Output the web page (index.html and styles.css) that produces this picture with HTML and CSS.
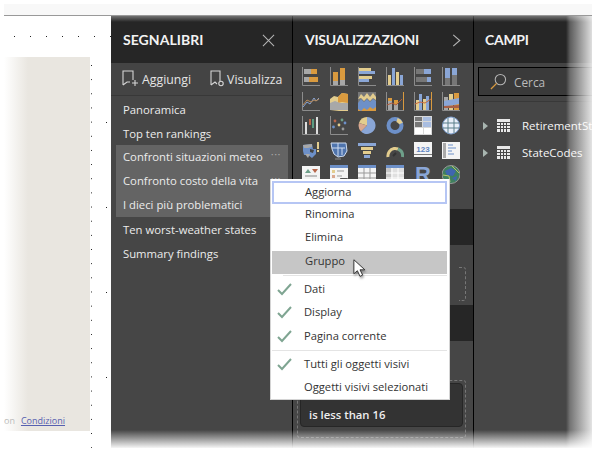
FILE: index.html
```html
<!DOCTYPE html>
<html lang="it">
<head>
<meta charset="utf-8">
<title>Segnalibri</title>
<link rel="stylesheet" href="styles.css">
</head>
<body>
<div class="page">
  <div class="topstrip"></div>
  <div class="window">
    <section class="canvas">
      <div class="dots-row"></div>
      <div class="canvas-body">
        <div class="report">
          <p class="terms"><span class="terms-on">on</span><a class="terms-link">Condizioni</a></p>
        </div>
        <div class="dots-col"></div>
      </div>
    </section>

    <section class="panel bookmarks">
      <header class="panel-head">
        <h2>SEGNALIBRI</h2>
        <svg class="head-icon" viewBox="0 0 14 14"><path d="M1 1l12 12M13 1L1 13" fill="none" stroke="#b5b5b5" stroke-width="1.1"/></svg>
      </header>
      <div class="toolbar">
        <span class="tool">
          <svg class="tool-ic" viewBox="0 0 18 18"><path d="M2 15V1h10v9M2 15l4-3h3M11 13h6M14 10v6" fill="none" stroke="#d6d6d6" stroke-width="1.1"/></svg>Aggiungi
        </span>
        <span class="tool tool-view">
          <svg class="tool-ic" viewBox="0 0 18 18"><path d="M3 15V1h9v10M3 15l4-3 2 2" fill="none" stroke="#d6d6d6" stroke-width="1.1"/><circle cx="13" cy="13.5" r="2.2" fill="none" stroke="#d6d6d6" stroke-width="1.1"/></svg>Visualizza
        </span>
      </div>
      <ul class="marks">
        <li>Panoramica</li>
        <li>Top ten rankings</li>
        <li class="sel">Confronti situazioni meteo<span class="more">···</span></li>
        <li class="sel">Confronto costo della vita<span class="more">···</span></li>
        <li class="sel">I dieci più problematici<span class="more">···</span></li>
        <li>Ten worst-weather states</li>
        <li>Summary findings</li>
      </ul>
    </section>

    <section class="panel viz">
      <header class="panel-head">
        <h2>VISUALIZZAZIONI</h2>
        <svg class="head-chev" viewBox="0 0 9 14"><path d="M1 1l7 6-7 6" fill="none" stroke="#b5b5b5" stroke-width="1.2"/></svg>
      </header>
      <div class="viz-icons">
        <svg class="vi" viewBox="0 0 18 19"><path d="M.5 0v18.500H18" fill="none" stroke="#8c8c8c"/><rect x="2" y="2" width="7" height="5" fill="#a8a8a8"/><rect x="9" y="2" width="6" height="5" fill="#d99a3f"/><rect x="2" y="10" width="5" height="5" fill="#a8a8a8"/><rect x="7" y="10" width="9" height="5" fill="#d99a3f"/></svg>
        <svg class="vi" viewBox="0 0 18 19"><path d="M.5 0v18.500H18" fill="none" stroke="#8c8c8c"/><rect x="3" y="5" width="5" height="9" fill="#d99a3f"/><rect x="3" y="14" width="5" height="4" fill="#a8a8a8"/><rect x="10" y="1" width="5" height="12" fill="#d99a3f"/><rect x="10" y="13" width="5" height="5" fill="#a8a8a8"/></svg>
        <svg class="vi" viewBox="0 0 18 19"><path d="M.5 0v18.500H18" fill="none" stroke="#8c8c8c"/><rect x="1" y="1" width="12" height="3" fill="#e3cd8e"/><rect x="1" y="4" width="16" height="3" fill="#8aa6d6"/><rect x="1" y="9" width="13" height="3" fill="#e3cd8e"/><rect x="1" y="12" width="10" height="3" fill="#8aa6d6"/></svg>
        <svg class="vi" viewBox="0 0 18 19"><path d="M.5 0v18.500H18" fill="none" stroke="#8c8c8c"/><rect x="2" y="8" width="3" height="10" fill="#e3cd8e"/><rect x="6" y="1" width="3" height="17" fill="#8aa6d6"/><rect x="10" y="5" width="3" height="13" fill="#e3cd8e"/><rect x="14" y="8" width="3" height="10" fill="#8aa6d6"/></svg>
        <svg class="vi" viewBox="0 0 18 19"><path d="M.5 0v18.500H18" fill="none" stroke="#8c8c8c"/><rect x="2" y="2" width="8" height="5" fill="#777"/><rect x="10" y="2" width="7" height="5" fill="#8aa6d6"/><rect x="2" y="10" width="11" height="5" fill="#777"/><rect x="13" y="10" width="4" height="5" fill="#8aa6d6"/></svg>
        <svg class="vi" viewBox="0 0 18 19"><path d="M.5 0v18.500H18" fill="none" stroke="#8c8c8c"/><rect x="3" y="1" width="5" height="10" fill="#8aa6d6"/><rect x="3" y="11" width="5" height="7" fill="#777"/><rect x="10" y="1" width="5" height="7" fill="#8aa6d6"/><rect x="10" y="8" width="5" height="10" fill="#777"/></svg>

        <svg class="vi" viewBox="0 0 18 19"><path d="M.5 0v18.500H18" fill="none" stroke="#8c8c8c"/><path d="M1 15l4-5 3 2 4-6 2 3 3-3" fill="none" stroke="#8aa6d6"/><path d="M1 13l4-5 4 2 3-2 2 1 3-2" fill="none" stroke="#b98a58"/></svg>
        <svg class="vi" viewBox="0 0 18 19"><path d="M0 18V7l4-3 4 1 4-4 6 1v18z" fill="#e3cd8e"/><path d="M8 5l4-4 6 1v9l-6-1-4 1z" fill="#d99a3f"/><path d="M0 18v-7l5-2 5 2 8 0v7z" fill="#a8a8a8"/></svg>
        <svg class="vi" viewBox="0 0 18 19"><rect width="18" height="19" fill="#777"/><path d="M0 19v-7l3 2 3-3 3 2 3-3 3 2 3-2v9z" fill="#d99a3f"/><path d="M0 11l3-4 3 3 3-3 3 3 3-3 3 2v6l-3 2-3-2-3 3-3-2-3 3-3-2z" fill="#6d90c8"/><path d="M0 7l3-5 3 3 3-4 3 4 3-4 3 4v3l-3-2-3 3-3-3-3 3-3-3z" fill="#e3cd8e"/></svg>
        <svg class="vi" viewBox="0 0 18 19"><path d="M.5 0v18.500H18" fill="none" stroke="#8c8c8c"/><path d="M17.500 0v18" stroke="#d99a3f"/><rect x="2" y="9" width="4" height="9" fill="#a8a8a8"/><rect x="2" y="6" width="4" height="3" fill="#d99a3f"/><rect x="8" y="12" width="4" height="6" fill="#a8a8a8"/><rect x="8" y="8" width="4" height="4" fill="#d99a3f"/><path d="M1 13l5-2 4 2 6-6" fill="none" stroke="#b05c3a"/></svg>
        <svg class="vi" viewBox="0 0 18 19"><path d="M.5 0v18.500H18" fill="none" stroke="#8c8c8c"/><path d="M17.500 0v18" stroke="#d99a3f"/><rect x="2" y="8" width="3" height="10" fill="#e3cd8e"/><rect x="5" y="2" width="3" height="16" fill="#8aa6d6"/><rect x="9" y="7" width="3" height="11" fill="#e3cd8e"/><rect x="12" y="4" width="3" height="14" fill="#8aa6d6"/><path d="M1 12l5-2 5 1 6-4" fill="none" stroke="#c76a3e"/></svg>
        <svg class="vi" viewBox="0 0 18 19"><path d="M.5 0v18.500H18" fill="none" stroke="#8c8c8c"/><rect x="2" y="5" width="4" height="13" fill="#a8a8a8"/><rect x="7" y="2" width="4" height="16" fill="#e3cd8e"/><rect x="12" y="1" width="5" height="17" fill="#d99a3f"/><path d="M2 9l15-3v6l-15 3z" fill="#8aa6d6"/><path d="M2 14l15-1v3H2z" fill="#a85f45"/></svg>

        <svg class="vi" viewBox="0 0 18 19"><path d="M.5 0v18.500H18" fill="none" stroke="#8c8c8c"/><rect x="3" y="6" width="2" height="12" fill="#ddd"/><rect x="7" y="3" width="2" height="6" fill="#b8664a"/><rect x="10" y="3" width="2" height="9" fill="#5c9c82"/><rect x="14" y="1" width="2" height="17" fill="#ddd"/></svg>
        <svg class="vi" viewBox="0 0 18 19"><path d="M.5 0v18.500H18" fill="none" stroke="#8c8c8c"/><circle cx="5" cy="5" r="1.400" fill="#b8664a"/><circle cx="12" cy="4" r="1.400" fill="#6ea08a"/><circle cx="3.500" cy="11" r="1.400" fill="#6d90c8"/><circle cx="9" cy="9" r="1.400" fill="#e3cd8e"/><circle cx="15" cy="7" r="1.400" fill="#6d90c8"/><circle cx="13" cy="13" r="1.400" fill="#999"/></svg>
        <svg class="vi" viewBox="0 0 18 19"><path d="M9 1a8.500 8.500 0 1 1-6 14.500L9 9.500z" fill="#8aa6d6"/><path d="M9 1v8.500L1 7a8.500 8.500 0 0 1 8-6z" fill="#e3cd8e"/><path d="M1 7l8 2.500-6 6A8.500 8.500 0 0 1 1 7z" fill="#d9a890"/></svg>
        <svg class="vi" viewBox="0 0 18 19"><circle cx="9" cy="9.500" r="6.500" fill="none" stroke="#6d90c8" stroke-width="4"/><path d="M11 4a6.500 6.500 0 0 1 4 3.500" fill="none" stroke="#e3cd8e" stroke-width="4"/></svg>
        <svg class="vi" viewBox="0 0 18 19"><rect width="18" height="19" fill="#d8d8d8"/><rect x="1" y="1" width="7" height="4" fill="#777"/><rect x="9" y="1" width="8" height="4" fill="#a9bde0"/><rect x="1" y="6" width="7" height="5" fill="#777"/><rect x="9" y="6" width="8" height="5" fill="#a9bde0"/><rect x="1" y="12" width="8" height="6" fill="#fff"/><rect x="10" y="12" width="7" height="6" fill="#fff"/></svg>
        <svg class="vi" viewBox="0 0 18 19"><circle cx="9" cy="9.500" r="8.500" fill="#e8eef8" stroke="#7f9fd0"/><path d="M1 7h16M1 12h16M6 1.500v16M12 1.500v16" stroke="#5a7f8a" fill="none"/></svg>

        <svg class="vi" viewBox="0 0 18 19"><path d="M1 4l9-1 1 5 3 0v5l-4 4-4-3-4 0-1-4z" fill="#6d90c8"/><path d="M1 4l9-1v3l-4 1-4 0z" fill="#a8a8a8"/><path d="M3 13h5l-2 4z" fill="#a8a8a8"/><path d="M8 8l4 1-1 3-3-1z" fill="#444"/><rect x="15" y="1" width="2" height="7" fill="#e3cd8e"/><rect x="15" y="9" width="2" height="2" fill="#e3cd8e"/></svg>
        <svg class="vi" viewBox="0 0 18 19"><path d="M1 2h15l1 8-3 5-6 1-4-3-2-5z" fill="#4f74ad" stroke="#cfdcf0" stroke-width="1"/><path d="M2 7h13M8 2v13M12 7v7" stroke="#cfdcf0" fill="none"/><rect x="5" y="17.500" width="6" height="1" fill="#8c8c8c"/></svg>
        <svg class="vi" viewBox="0 0 18 19"><rect x="0" y="2" width="18" height="3" fill="#8aa6d6"/><rect x="3" y="6" width="12" height="3" fill="#e3cd8e"/><rect x="5" y="10" width="8" height="3" fill="#e3cd8e"/><rect x="6" y="14" width="6" height="3" fill="#8aa6d6"/></svg>
        <svg class="vi" viewBox="0 0 18 19"><path d="M2 16a7.500 7.500 0 0 1 6-8.500 7.500 7.500 0 0 1 4 .5" fill="none" stroke="#e3cd8e" stroke-width="3"/><path d="M12 8a7.500 7.500 0 0 1 4.500 8" fill="none" stroke="#6ea08a" stroke-width="3"/><path d="M7 15l3-3" stroke="#333" stroke-width="2"/></svg>
        <svg class="vi" viewBox="0 0 18 19"><rect y="1" width="18" height="15" fill="#f4f4f4"/><rect y="13" width="18" height="1" fill="#777"/><text class="vi-num" x="9" y="10.500">123</text></svg>
        <svg class="vi" viewBox="0 0 18 19"><rect y="1" width="18" height="17" fill="#f4f4f4"/><rect x="1" y="2" width="3" height="15" fill="#aaa"/><path d="M6 4h5M6 7h8M6 10h4M6 13h6" stroke="#6d90c8" fill="none"/></svg>

        <svg class="vi" viewBox="0 0 18 19"><rect y="1" width="18" height="18" fill="#f4f4f4"/><path d="M3 8l3-4 3 4z" fill="#6ea08a"/><path d="M10 4h6l-3 4z" fill="#b8664a"/><path d="M3 11h12" stroke="#888"/></svg>
        <svg class="vi" viewBox="0 0 18 19"><rect y="0" width="18" height="19" fill="#f4f4f4"/><rect y="0" width="18" height="3" fill="#6d90c8"/><rect x="2" y="5" width="3" height="3" fill="#e3cd8e"/><rect x="2" y="10" width="3" height="3" fill="#d9a890"/><path d="M7 6h7M7 11h5" stroke="#999"/><path d="M10 13h8l-3 6h-3z" fill="#555"/></svg>
        <svg class="vi" viewBox="0 0 18 19"><rect y="0" width="18" height="19" fill="#f4f4f4"/><rect y="0" width="18" height="3" fill="#6d90c8"/><path d="M6 3v16M12 3v16M0 8h18M0 13h18" stroke="#999"/></svg>
        <svg class="vi" viewBox="0 0 18 19"><rect y="0" width="18" height="19" fill="#e0e0e0"/><rect y="0" width="18" height="3" fill="#6d90c8"/><rect y="3" width="5" height="16" fill="#c6c6c6"/><path d="M6 3v16M12 3v16M0 8h18M0 13h18" stroke="#fff"/></svg>
        <span class="vi vi-r">R</span>
        <svg class="vi" viewBox="0 0 18 19"><circle cx="9" cy="9.500" r="9" fill="#3f7f5f" stroke="#999"/><path d="M3 6l6-3 5 3-3 5-6-1zM10 13l5-2-1 5z" fill="#3f66b0"/><path d="M1 10l6 1 1 6M10 1l7 7" stroke="#b7c36a" fill="none"/></svg>
      </div>
      <div class="viz-band"></div>
      <div class="viz-wells"><div class="dashed dashed-first"></div></div>
      <div class="viz-band"></div>
      <div class="viz-filter">
        <div class="dashed dashed-last">
          <div class="filter-card">is less than 16</div>
        </div>
      </div>
    </section>

    <section class="panel fields">
      <header class="panel-head"><h2>CAMPI</h2></header>
      <div class="search-wrap">
        <div class="search">
          <svg class="search-ic" viewBox="0 0 18 18"><circle cx="11" cy="7" r="5.500" fill="none" stroke="#b5b5b5" stroke-width="1.100"/><path d="M7 11l-6 6" stroke="#d99a3f" stroke-width="1.400"/></svg>
          <span>Cerca</span>
        </div>
      </div>
      <ul class="tables">
        <li><i class="caret"></i><svg class="tbl" viewBox="0 0 13 13"><rect width="13" height="13" fill="#e8e8e8"/><path d="M0 3.500h13M0 6.500h13M0 9.500h13M3.500 3v10M6.500 3v10M9.500 3v10" stroke="#464646"/></svg><span>RetirementStats</span></li>
        <li><i class="caret"></i><svg class="tbl" viewBox="0 0 13 13"><rect width="13" height="13" fill="#e8e8e8"/><path d="M0 3.500h13M0 6.500h13M0 9.500h13M3.500 3v10M6.500 3v10M9.500 3v10" stroke="#464646"/></svg><span>StateCodes</span></li>
      </ul>
    </section>
  </div>

  <div class="fade fade-top"></div>
  <div class="fade fade-right"></div>
  <div class="fade fade-bottom"></div>

  <div class="menu">
    <div class="mi focus">Aggiorna</div>
    <div class="mi">Rinomina</div>
    <div class="mi">Elimina</div>
    <div class="mi hover">Gruppo</div>
    <hr class="sep">
    <div class="mi chk"><svg class="check" viewBox="0 0 15 13"><path d="M1 7l4 4 9-10" fill="none" stroke="#7fa592" stroke-width="2"/></svg>Dati</div>
    <div class="mi chk"><svg class="check" viewBox="0 0 15 13"><path d="M1 7l4 4 9-10" fill="none" stroke="#7fa592" stroke-width="2"/></svg>Display</div>
    <div class="mi chk"><svg class="check" viewBox="0 0 15 13"><path d="M1 7l4 4 9-10" fill="none" stroke="#7fa592" stroke-width="2"/></svg>Pagina corrente</div>
    <hr class="sep">
    <div class="mi chk"><svg class="check" viewBox="0 0 15 13"><path d="M1 7l4 4 9-10" fill="none" stroke="#7fa592" stroke-width="2"/></svg>Tutti gli oggetti visivi</div>
    <div class="mi chk">Oggetti visivi selezionati</div>
  </div>

  <svg class="cursor" viewBox="0 0 16 22"><path d="M1 1v16l4-3.500 3 6.500 3-1.500-3-6h5.500z" fill="#fff" stroke="#222" stroke-width="1"/></svg>
</div>
</body>
</html>
```
FILE: styles.css
```css
* { box-sizing: border-box; }
html, body { margin: 0; padding: 0; }
body { background: #fff; font-family: "Open Sans", "Noto Sans", sans-serif; }
ul { list-style: none; margin: 0; padding: 0; }

.page { position: relative; width: 597px; height: 452px; overflow: hidden; background: #fff; display: flex; flex-direction: column; padding: 4px 5px 4px 4px; }
.topstrip { height: 11px; flex: none; background: #f8f8f8; }
.window { flex: 1; min-height: 0; display: flex; border-top: 1px solid #999; }

/* canvas */
.canvas { width: 107px; flex: none; background: #fff; display: flex; flex-direction: column; }
.dots-row { height: 41px; flex: none; background: radial-gradient(circle at .5px .5px, #222 .7px, transparent .8px) 10px 20px / 16px 41px repeat-x; }
.canvas-body { flex: 1; display: flex; min-height: 0; }
.report { width: 86px; flex: none; height: 374px; background: linear-gradient(90deg, #fff 0, #e9e6e0 24px); display: flex; align-items: flex-end; padding-bottom: 3px; }
.dots-col { flex: 1; background:
  radial-gradient(circle at .5px .5px, #222 .7px, transparent .8px) 16px 65px / 100px 85px repeat-y,
  radial-gradient(circle at .5px .5px, #222 .7px, transparent .8px) 1px 8px / 100px 14.170px repeat-y; }
.terms { margin: 0; font-size: 9px; line-height: 14px; white-space: nowrap; }
.terms-on { color: #bbb; margin-right: 6px; }
.terms-link { color: #5660b0; text-decoration: underline; }

/* panels */
.panel { display: flex; flex-direction: column; background: #464646; color: #fff; }
.bookmarks { width: 182px; flex: none; border-right: 1px solid #000; }
.viz { width: 181px; flex: none; border-right: 1px solid #000; }
.fields { flex: 1; min-width: 0; overflow: hidden; }
.panel-head { height: 47px; flex: none; background: #262626; display: flex; align-items: center; justify-content: space-between; padding: 1px 12px 0 12px; }
.panel-head h2 { margin: 0; font: 700 14px/18px Lato, "Open Sans", sans-serif; letter-spacing: .05px; color: #f2f2f2; }
.viz .panel-head h2 { letter-spacing: -.3px; }
.fields .panel-head { padding-left: 11px; }
.fields .panel-head h2 { letter-spacing: -.3px; }
.head-icon { width: 13px; height: 13px; margin-right: 5px; }
.head-chev { width: 9px; height: 13px; margin-right: 0; }

.toolbar { height: 33px; flex: none; background: #444; border-bottom: 1px solid #383838; display: flex; align-items: center; padding: 1px 0 0 10px; font-size: 12.300px; color: #e4e4e4; }
.tool { display: flex; align-items: center; gap: 3px; }
.tool-view { margin-left: 17px; gap: 1px; }
.tool-ic { width: 18px; height: 18px; flex: none; margin-top: -2px; }

.marks { padding: 2px 4px 0 5px; }
.marks li { height: 24px; line-height: 23px; font-size: 11.300px; padding-left: 7px; color: #ececec; white-space: nowrap; position: relative; }
.marks li:nth-child(3) { margin-top: -1px; }
.marks li:nth-child(6) { margin-top: 1px; }
.marks li.sel { background: #646464; }
.more { position: absolute; right: 7px; top: -3px; color: #aaa; font-size: 11px; letter-spacing: .5px; }

/* visualizations */
.viz-icons { height: 146px; flex: none; overflow: hidden; display: grid; grid-template-columns: repeat(6, 18px); column-gap: 10px; row-gap: 5.500px; align-content: start; padding: 4px 0 0 9px; }
.vi { width: 18px; height: 19px; display: block; }
.vi-num { font: 700 8px "Liberation Sans", sans-serif; fill: #5f85c2; text-anchor: middle; }
.vi-r { font: 700 22px/19px "Liberation Sans", sans-serif; color: #8aa6d6; text-align: center; }
.viz-band { height: 36px; flex: none; background: #262626; }
.viz-wells { height: 60px; flex: none; background: #444; padding: 22px 7px 4px 6px; }
.viz-filter { flex: 1; padding: 39px 7px 0 4px; }
.dashed { border: 1px dashed #777; border-radius: 3px; }
.dashed-first { height: 34px; margin-left: 160px; border-left: 0; border-radius: 0 3px 3px 0; }
.dashed-last { height: 58px; padding: 2px 2px; }
.filter-card { height: 44px; background: #333; border: 1px solid #262626; border-radius: 4px; padding: 22px 0 0 8px; font-size: 11.300px; line-height: 18px; font-weight: 600; color: #eee; }

/* fields */
.search-wrap { height: 39px; flex: none; background: #444; border-bottom: 1px solid #383838; padding: 4px 0 5px 4px; }
.search { height: 29px; width: 130px; background: #3a3a3a; border: 1px solid #000; display: flex; align-items: center; padding-left: 11px; gap: 7px; font-size: 11.800px; color: #bbb; }
.search-ic { width: 17px; height: 17px; flex: none; }
.tables { padding-top: 10px; }
.tables li { height: 27px; display: flex; align-items: center; white-space: nowrap; padding-left: 9px; font-size: 11.500px; color: #f5f5f5; }
.caret { width: 0; height: 0; border-left: 5px solid #a8b5b0; border-top: 4px solid transparent; border-bottom: 4px solid transparent; margin-right: 9px; }
.tbl { width: 13px; height: 13px; flex: none; margin-right: 12px; }

/* edge fades */
.fade { position: absolute; pointer-events: none; }
.fade-top { left: 111px; right: 5px; top: 16px; height: 6px; background: linear-gradient(180deg, rgba(255,255,255,.35), rgba(255,255,255,0)); }
.fade-right { top: 16px; bottom: 4px; right: 5px; width: 26px; background: linear-gradient(90deg, rgba(255,255,255,0) 0, rgba(255,255,255,.25) 15%, rgba(255,255,255,.85) 100%); }
.fade-bottom { left: 111px; right: 5px; bottom: 4px; height: 18px; background: linear-gradient(180deg, rgba(255,255,255,0) 0, rgba(255,255,255,.95) 100%); }

/* context menu */
.menu { position: absolute; left: 270px; top: 179px; width: 180px; height: 221px; background: #fff; border: 1px solid #d4d4d4; border-width: 0 1px 1px 1px; padding: 2px 2px 0 1px; font-size: 11.200px; color: #333; }
.mi { height: 23.200px; line-height: 20px; padding-left: 33px; position: relative; white-space: nowrap; }
.mi.focus { border: 2px solid #b6c6f4; line-height: 18px; padding-left: 31px; margin-left: 0; }
.mi.hover { background: #c6c6c6; }
.mi.chk { padding-left: 32px; line-height: 21px; }
.sep { border: 0; height: 1px; background: #e4e4e4; margin: 1px 0 2.500px 11px; }
.mi.chk + .sep { margin-top: 2px; margin-bottom: 2px; margin-left: 0; }
.check { position: absolute; left: 5px; top: 5px; width: 15px; height: 13px; }
.cursor { position: absolute; left: 353px; top: 258px; width: 14px; height: 21px; filter: drop-shadow(1px 2px 1px rgba(0,0,0,.35)); }
```
